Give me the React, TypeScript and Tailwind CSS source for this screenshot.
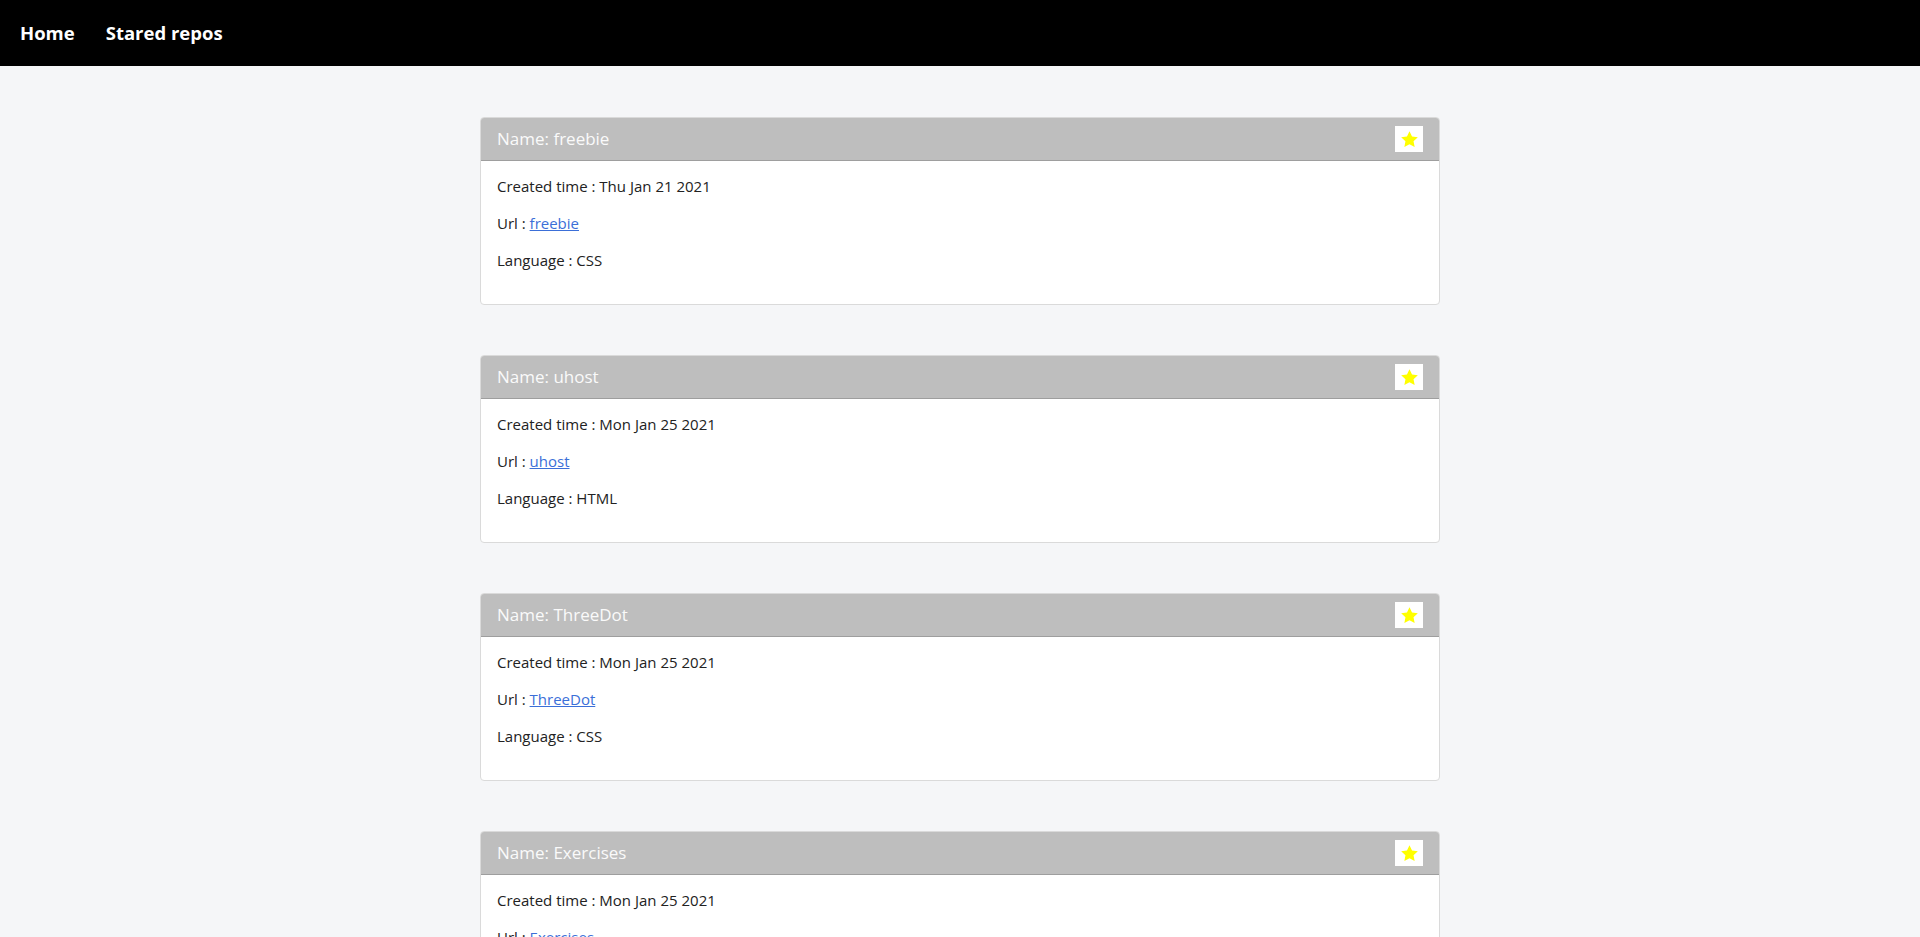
const repos = [
  { name: 'freebie', created: 'Thu Jan 21 2021', language: 'CSS' },
  { name: 'uhost', created: 'Mon Jan 25 2021', language: 'HTML' },
  { name: 'ThreeDot', created: 'Mon Jan 25 2021', language: 'CSS' },
  { name: 'Exercises', created: 'Mon Jan 25 2021', language: 'CSS' },
];

const Star = () => (
  <svg viewBox="0 0 24 24" className="w-[19px] h-[19px]" fill="#ffff00">
    <path d="M12 1.5l3.2 6.7 7.3.9-5.4 5.1 1.4 7.3L12 18l-6.5 3.5 1.4-7.3-5.4-5.1 7.3-.9z" />
  </svg>
);

interface RepoCardProps {
  name: string;
  created: string;
  language: string;
}

const RepoCard = ({ name, created, language }: RepoCardProps) => (
  <div className="w-[960px] mx-auto mb-[50px] bg-white border border-[#dadada] rounded-[4px] overflow-hidden">
    <div className="h-[43px] bg-[#bebebe] border-b border-[#9e9e9e] flex items-center justify-between pl-4 pr-4">
      <span className="text-[17px] text-[#fafafa]">Name: {name}</span>
      <button className="w-[28px] h-[26px] bg-white flex items-center justify-center">
        <Star />
      </button>
    </div>
    <div className="px-4 pt-[13px] pb-[32px] text-[15px] text-[#222] leading-[24px]">
      <p className="mb-[13px]">Created time : {created}</p>
      <p className="mb-[13px]">
        Url : <a href="#" className="text-[#3b6fd8] underline">{name}</a>
      </p>
      <p>Language : {language}</p>
    </div>
  </div>
);

export default function App() {
  return (
    <div className="min-h-screen bg-[#f5f6f8]" style={{ fontFamily: '"Open Sans", "Noto Sans", sans-serif' }}>
      <nav className="h-[66px] bg-black flex items-center gap-[31px] px-5">
        <a href="#" className="text-white font-bold text-[18.5px]">Home</a>
        <a href="#" className="text-white font-bold text-[18.5px]">Stared repos</a>
      </nav>
      <main className="pt-[51px]">
        {repos.map((r) => (
          <RepoCard key={r.name} {...r} />
        ))}
      </main>
    </div>
  );
}
